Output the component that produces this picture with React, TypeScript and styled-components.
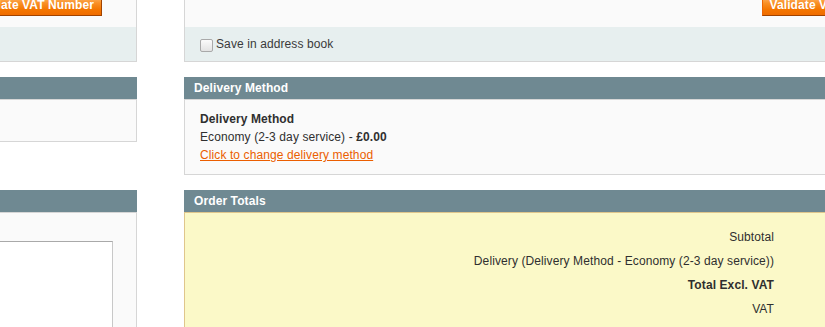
import styled, { createGlobalStyle } from "styled-components";

const GlobalStyles = createGlobalStyle`
  html, body {
    margin: 0;
    padding: 0;
    background: #ffffff;
    overflow: hidden;
  }
  body {
    font: 12px/18px "Liberation Sans", Arial, Helvetica, sans-serif;
    letter-spacing: 0.1px;
    color: #2f2f2f;
  }
`;

// the page is scrolled: we only see a slice of a wide two column form
const Page = styled.div`
  margin: -15px 0 0 -613px;
  display: grid;
  grid-template-columns: 750px 750px;
  column-gap: 47px;
  align-items: start;
`;

const Box = styled.div`
  margin-bottom: 15px;
`;

const Head = styled.div`
  background: #6f8992;
  padding: 2px 10px;
  height: 18px;
`;

const HeadTitle = styled.h4`
  margin: 0;
  font-size: 12px;
  line-height: 18px;
  font-weight: bold;
  color: #ffffff;
`;

const Fieldset = styled.div<{ $minHeight?: number; $padded?: boolean }>`
  background: #fafafa;
  border: 1px solid #d6d6d6;
  padding: ${({ $padded }) => ($padded ? "10px 15px" : "0")};
  min-height: ${({ $minHeight }) => ($minHeight ? `${$minHeight}px` : "0")};
  box-sizing: content-box;
`;

const AddressBody = styled.div`
  display: flex;
  justify-content: flex-end;
  padding: 10px 34px 11px 15px;
`;

const OrangeButton = styled.button`
  font: bold 12px/16px "Liberation Sans", Arial, Helvetica, sans-serif;
  letter-spacing: 0.1px;
  color: #ffffff;
  height: 20px;
  padding: 0 7px 2px;
  border: 1px solid;
  border-color: #ed6502 #a04300 #a04300 #ed6502;
  background: linear-gradient(to bottom, #fdb465 0%, #f98f24 35%, #f47600 70%, #ef6c00 100%);
  white-space: nowrap;
  cursor: pointer;
`;

const AddressFooter = styled.label`
  display: flex;
  align-items: center;
  height: 34px;
  padding-left: 15px;
  background: #e7efef;
  color: #3a3a3a;
`;

const Check = styled.input`
  appearance: none;
  width: 13px;
  height: 13px;
  margin: 3px 3px 0 0;
  border: 1px solid #a9a9a9;
  border-radius: 2px;
  background: linear-gradient(to bottom, #fbfbfb, #e3e3e3);
  box-sizing: border-box;
`;

const MethodTitle = styled.div`
  font-weight: bold;
`;

const Strong = styled.strong`
  font-weight: bold;
`;

const ChangeLink = styled.a`
  color: #eb5e00;
  text-decoration: underline;
  cursor: pointer;
`;

const CommentBox = styled.div`
  margin: 18px 8px 0 0;
  height: 110px;
  background: #ffffff;
  border: 1px solid #c8c8c8;
  border-top-color: #a9a9a9;
  border-left-color: #a9a9a9;
`;

const TotalsBody = styled.div`
  background: #fbf9c8;
  border: 1px solid #dfc68c;
  padding: 12px 0;
`;

const TotalsRow = styled.div<{ $strong?: boolean }>`
  display: grid;
  grid-template-columns: 1fr 151px;
  line-height: 24px;
  font-weight: ${({ $strong }) => ($strong ? "bold" : "normal")};
`;

const TotalsLabel = styled.div`
  text-align: right;
  padding-right: 8px;
`;

const TotalsValue = styled.div`
  text-align: right;
  padding-right: 15px;
`;

const totals = [
  { label: "Subtotal", value: "£24.99" },
  { label: "Delivery (Delivery Method - Economy (2-3 day service))", value: "£0.00" },
  { label: "Total Excl. VAT", value: "£24.99", strong: true },
  { label: "VAT", value: "£5.00" },
];

function AddressBox({ withSave }: { withSave?: boolean }) {
  return (
    <Box>
      <Fieldset>
        <AddressBody>
          <OrangeButton type="button">Validate VAT Number</OrangeButton>
        </AddressBody>
        <AddressFooter>
          {withSave && (
            <>
              <Check type="checkbox" />
              Save in address book
            </>
          )}
        </AddressFooter>
      </Fieldset>
    </Box>
  );
}

export default function App() {
  return (
    <>
      <GlobalStyles />
      <Page>
        <AddressBox />
        <AddressBox withSave />

        <Box>
          <Head>
            <HeadTitle>Payment Method</HeadTitle>
          </Head>
          <Fieldset $padded $minHeight={21} />
        </Box>
        <Box>
          <Head>
            <HeadTitle>Delivery Method</HeadTitle>
          </Head>
          <Fieldset $padded>
            <MethodTitle>Delivery Method</MethodTitle>
            <div>
              Economy (2-3 day service) - <Strong>£0.00</Strong>
            </div>
            <ChangeLink>Click to change delivery method</ChangeLink>
          </Fieldset>
        </Box>

        <Box>
          <Head>
            <HeadTitle>Order History</HeadTitle>
          </Head>
          <Fieldset $padded>
            <CommentBox />
          </Fieldset>
        </Box>
        <Box>
          <Head>
            <HeadTitle>Order Totals</HeadTitle>
          </Head>
          <TotalsBody>
            {totals.map((t) => (
              <TotalsRow key={t.label} $strong={t.strong}>
                <TotalsLabel>{t.label}</TotalsLabel>
                <TotalsValue>{t.value}</TotalsValue>
              </TotalsRow>
            ))}
          </TotalsBody>
        </Box>
      </Page>
    </>
  );
}
